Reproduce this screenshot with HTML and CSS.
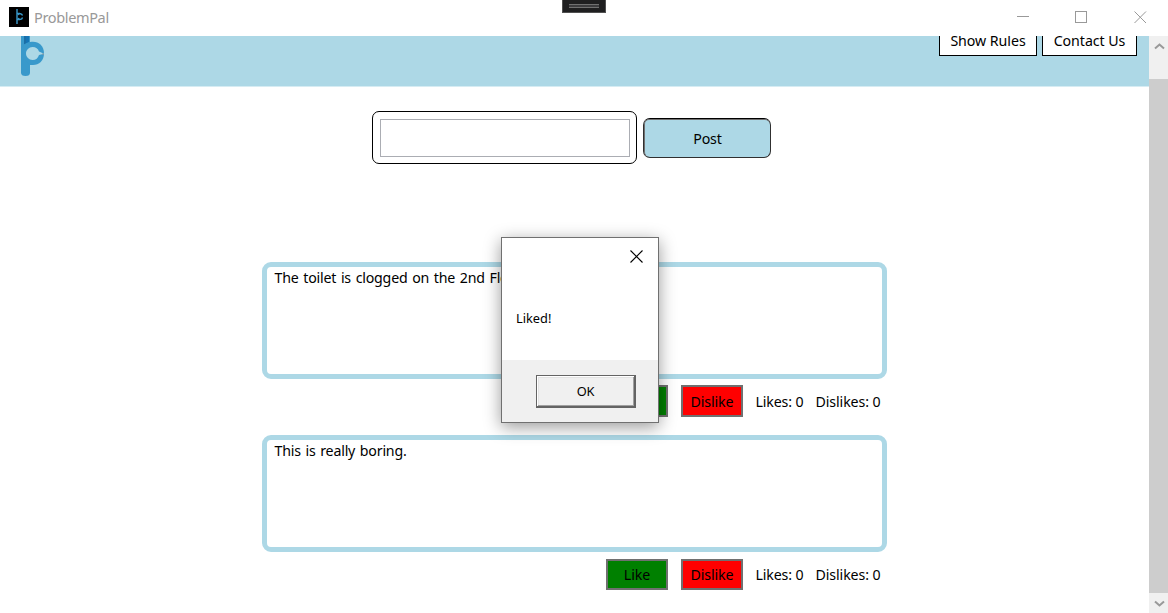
FILE: index.html
```
<!DOCTYPE html>
<html lang="en">
<head>
<meta charset="utf-8">
<title>ProblemPal</title>
<link rel="stylesheet" href="styles.css">
</head>
<body>
<div class="window">
  <div class="titlebar">
    <svg class="app-icon" width="20" height="20" viewBox="0 0 20 20">
      <rect width="20" height="20" fill="#000"/>
      <path d="M8 2V17M8 6.5h3M8 12.5h3" stroke="#3999cb" stroke-width="1.4" fill="none"/>
      <path d="M13.500 8.500C13 6.500 10 6 9 8M13.500 10.500C13 13 10 13 9 11" stroke="#3999cb" stroke-width="1.3" fill="none"/>
    </svg>
    <span class="app-title">ProblemPal</span>
    <svg class="window-controls" width="131" height="14" viewBox="0 0 131 14" fill="none" stroke="#999" shape-rendering="crispEdges">
      <path d="M0 6.500h12M58.500 1.500h11v11h-11z"/>
      <path d="M117.500 1.500l11.500 11.500M129 1.500L117.500 13" shape-rendering="auto"/>
    </svg>
  </div>
  <div class="debug-tab"><span class="grip"></span></div>
  <div class="viewport">
    <main class="content">
      <header class="header">
        <svg class="logo" width="26" height="50" viewBox="0 0 26 50">
          <path d="M0 0h9v46.500q0 3.500-4.500 3.500T0 46.500z" fill="#3999cb"/>
          <path d="M3 10h2v7.500L3 18.500z" fill="#1b6fa6"/>
          <path d="M5 10h3v6L5 17.500z" fill="#1574b5"/>
          <path d="M0 22C4 17 8 15.800 12 15.800C18 15.800 23 20 23 27.500C23 34.500 18 39 12 39H8L0 30z" fill="#3999cb"/>
          <path d="M11.500 21C15 21 17 22.500 18 25.500L23 27.700L18 29C17 32 15 34 11.500 34C8 34 5 31 5 27.500C5 24 8 21 11.500 21z" fill="#add8e6"/>
          <path d="M21 27.500h2v1.200h-2z" fill="#7f9aa8"/>
        </svg>
        <nav class="nav">
          <button class="nav-button rules">Show Rules</button>
          <button class="nav-button contact">Contact Us</button>
        </nav>
      </header>
      <section class="composer">
        <div class="field"><input class="field-input" type="text" aria-label="Problem"></div>
        <button class="post-button"><span class="post-face">Post</span></button>
      </section>
      <section class="feed">
        <article class="post">
          <div class="card"><span class="card-text">The toilet is clogged on the 2nd Floor.</span></div>
          <div class="actions">
            <button class="vote like">Like</button>
            <button class="vote dislike">Dislike</button>
            <span class="likes">Likes: 0</span>
            <span class="dislikes">Dislikes: 0</span>
          </div>
        </article>
        <article class="post">
          <div class="card"><span class="card-text">This is really boring.</span></div>
          <div class="actions">
            <button class="vote like">Like</button>
            <button class="vote dislike">Dislike</button>
            <span class="likes">Likes: 0</span>
            <span class="dislikes">Dislikes: 0</span>
          </div>
        </article>
      </section>
    </main>
    <div class="scrollbar">
      <svg class="arrow-up" width="19" height="20" viewBox="0 0 19 20"><path d="M6 12.500l4.500-4 4.500 4" fill="none" stroke="#999" stroke-width="2"/></svg>
      <span class="thumb"></span>
      <svg width="19" height="20" viewBox="0 0 19 20"><path d="M6 8.500l4.500 4 4.500-4" fill="none" stroke="#999" stroke-width="2"/></svg>
    </div>
  </div>
  <div class="dialog" role="dialog">
    <div class="dialog-body">
      <svg class="dialog-close" width="13" height="13" viewBox="0 0 13 13"><path d="M.5.5l12 12M12.500.5l-12 12" stroke="#000" stroke-width="1.1"/></svg>
      <p class="dialog-message">Liked!</p>
    </div>
    <div class="dialog-footer"><button class="ok">OK</button></div>
  </div>
</div>
</body>
</html>
```
FILE: styles.css
```
* { box-sizing: border-box; }
body {
  margin: 0;
  background: #fff;
  color: #000;
  font: 14.2px/20px "Noto Sans", "Open Sans", sans-serif;
  letter-spacing: -0.2px;
  white-space: nowrap;
}
button { font: inherit; letter-spacing: inherit; color: inherit; padding: 0; border-radius: 0; }
.window { position: relative; display: flex; flex-direction: column; height: 613px; overflow: hidden; }
.titlebar { display: flex; align-items: center; height: 36px; padding: 0 20px 2px 9px; flex: none; }
.app-title { margin-left: 5px; color: #999; font-size: 14.500px; letter-spacing: -0.35px; }
.window-controls { margin-left: auto; }
.debug-tab { position: absolute; left: 562px; top: 0; width: 44px; height: 13px; padding: 4px 6px; background: #1f1f20; border: solid #505050; border-width: 0 1px 1px; }
.grip { display: block; height: 4px; background: #3c3c3e; border: solid #707070; border-width: 1px 0; }
.viewport { display: flex; height: 577px; overflow: hidden; }
.content { width: 1149px; margin-top: -10px; flex: none; }
.header { display: flex; justify-content: space-between; height: 61px; padding: 0 12px 0 21px; background: #add8e6; border-bottom: 1px solid #d6ecf3; }
.nav { display: flex; gap: 5px; }
.nav-button { height: 30px; background: #fff; border: 1px solid #000; letter-spacing: -0.05px; }
.rules { width: 98px; }
.contact { width: 95px; }
.composer { display: flex; align-items: center; gap: 6px; padding: 24px 0 0 372px; height: 77px; }
.field { width: 265px; height: 53px; padding: 7px 6px 6px 7px; border: 1.500px solid #000; border-radius: 7px; }
.field-input { display: block; width: 250px; height: 38px; border: 1px solid #abadb3; outline: none; }
.post-button { width: 128px; height: 40px; border: 1px solid #303030; border-top-color: #000; border-radius: 7px; background: #add8e6; }
.post-face { display: block; height: 38px; line-height: 37px; border: 1px solid #707070; border-width: 1px 0 0 1px; border-radius: 5px; }
.feed { display: flex; flex-direction: column; gap: 18px; width: 625px; margin: 98px 0 0 262px; }
.post { height: 155px; }
.card { height: 117px; border: 5px solid #add8e6; border-radius: 9px; padding: 1px 7.500px; }
.card-text { display: block; word-spacing: 1.2px; }
.actions { display: flex; align-items: center; height: 32px; margin: 6px 0 0 344px; }
.post + .post .actions { margin-top: 7px; height: 31px; }
.vote { width: 62px; height: 32px; border: 2px solid #707070; padding-top: 1px; letter-spacing: -0.1px; }
.post + .post .vote { height: 31px; }
.like { background: #008000; }
.dislike { background: #f00; margin-left: 13px; }
.likes { width: 60px; margin-left: 12.500px; padding-top: 1px; letter-spacing: -0.15px; }
.dislikes { padding-top: 1px; letter-spacing: -0.1px; }
.dialog { position: absolute; left: 501px; top: 237px; width: 158px; height: 186px; background: #fff; border: 1px solid #707070; box-shadow: 0 4px 16px rgba(0, 0, 0, .4); font-size: 12.800px; }
.dialog-body { height: 122px; padding: 12px 15px 12px 14px; display: flex; flex-direction: column; }
.dialog-close { align-self: flex-end; }
.dialog-message { margin: 45px 0 0; letter-spacing: 0; }
.dialog-footer { display: flex; justify-content: flex-end; height: 62px; padding: 15px 22px; background: #f0f0f0; }
.ok { width: 100px; height: 33px; background: #f0f0f0; border: solid #646464; border-width: 1px 2px 2px 1px; box-shadow: inset 1px 1px #fff, inset -1px -1px #a0a0a0, inset 2px 2px #e3e3e3; }
.scrollbar { display: flex; flex-direction: column; width: 19px; background: #f0f0f0; flex: none; }
.arrow-up { margin-bottom: 23px; }
.thumb { flex: 1; background: #cdcdcd; }
```
